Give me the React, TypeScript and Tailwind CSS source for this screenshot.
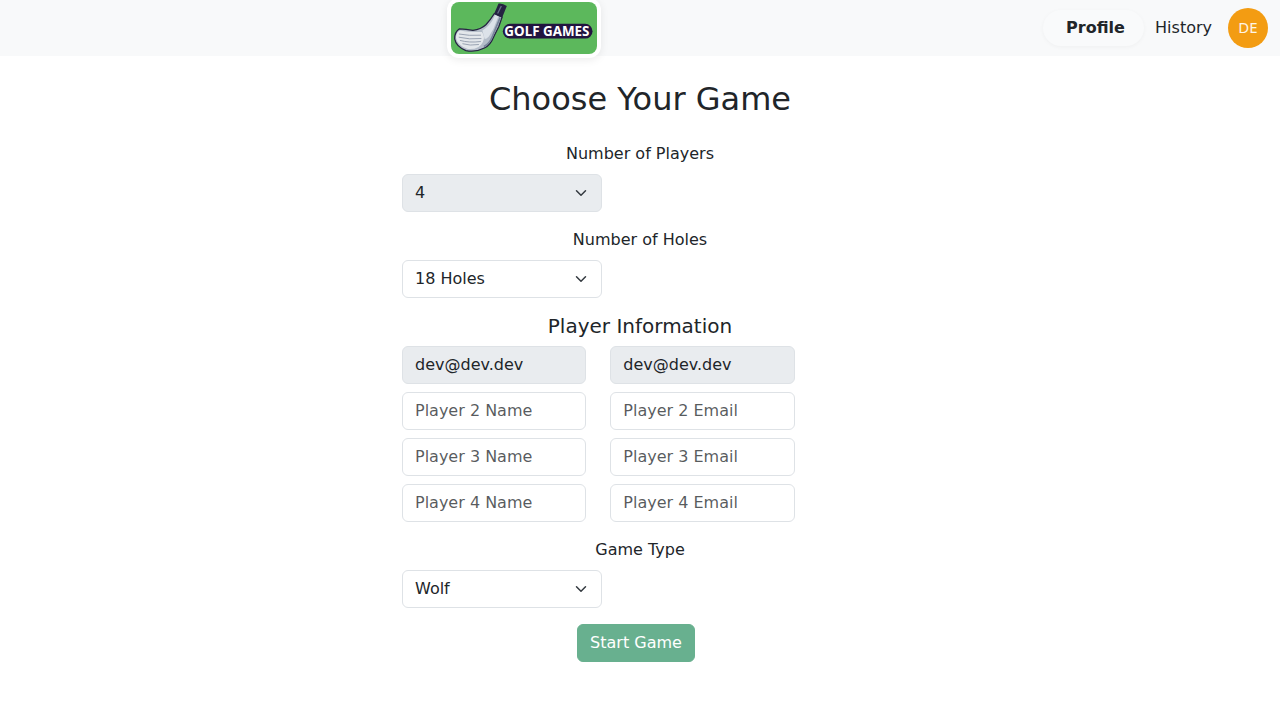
import { useState } from "react";

const field =
  "col-start-1 row-start-1 h-[38px] w-full min-w-0 rounded-md border border-[#dee2e6] px-3 text-base leading-6 text-[#212529] outline-none placeholder:text-[#212529]/75 disabled:bg-[#e9ecef] disabled:opacity-100";

function Select({
  label,
  options,
  disabled = false,
}: {
  label: string;
  options: string[];
  disabled?: boolean;
}) {
  return (
    <label className="mb-4 flex flex-col">
      <span className="mb-2 text-center">{label}</span>
      <span className="grid w-[200px] items-center">
        <select
          disabled={disabled}
          className={`${field} appearance-none py-1.5 ${disabled ? "" : "bg-white"}`}
        >
          {options.map((o) => (
            <option key={o}>{o}</option>
          ))}
        </select>
        <svg
          viewBox="0 0 16 16"
          className="pointer-events-none col-start-1 row-start-1 mr-[13px] h-3 w-4 justify-self-end"
          fill="none"
          stroke="#343a40"
          strokeLinecap="round"
          strokeLinejoin="round"
          strokeWidth="2"
        >
          <path d="m2 5 6 6 6-6" />
        </svg>
      </span>
    </label>
  );
}

function Logo() {
  return (
    <svg viewBox="0 0 147 52" className="block h-[52px] w-[146.5px] rounded-lg" preserveAspectRatio="none">
      <rect width="147" height="52" fill="#5cb85c" />
      <rect x="52" y="21.8" width="90" height="14.8" rx="7.4" fill="#211440" />
      <path
        d="M43.5 11.5 51.3 15 48 24.5 43 34.5Q39.5 43.5 33.5 46 25 50.5 15 48.6 5 44.5 3.7 37 3.5 30 8.5 26.8 15 27 22 28.4 30 27.5 35 22.8 39.5 18 43.5 11.5Z"
        fill="#b4bdc9"
        stroke="#252342"
        strokeWidth="1.3"
        strokeLinejoin="round"
      />
      <path d="M44.3 13 47.5 14.4 42.5 27 38 34.5Q35.5 37 33.8 37L31.5 28.5Q38 24.5 41.5 18.5Z" fill="#dce2e9" />
      <path d="M49.3 15.6 41.5 34.5Q38.5 42 33 44.5" fill="none" stroke="#77849a" strokeWidth="1.7" />
      <path
        d="M5 35.5Q5.8 29 9.5 28.5 18 30.3 31 30 34.5 34.5 32 40 28.5 47.8 17 47 6 43.5 5 35.5Z"
        fill="#e3e7eb"
      />
      <path
        d="M8 32Q18 34 30 33.2M7.8 35.2Q18 37.8 30.5 36.5M9 38.4Q18 41 30 39.5M11.5 41.7Q19 44 28 42.5"
        fill="none"
        stroke="#919bac"
        strokeWidth="0.9"
      />
      <path d="M47.7 1.5Q52 1 56 4L51.3 15.7 43.2 12Z" fill="#252342" />
      <path d="M50.5 4 46.8 11.5" stroke="#68708b" strokeWidth="1.3" />
      <text
        x="53.5"
        y="34.2"
        textLength="85.5"
        lengthAdjust="spacingAndGlyphs"
        fill="#fff"
        className="font-['Noto_Sans',sans-serif] text-[13.5px] font-bold"
      >
        GOLF GAMES
      </text>
    </svg>
  );
}

export default function App() {
  const [players, setPlayers] = useState<Record<string, string>>({});
  return (
    <div className="min-h-screen bg-white font-['DejaVu_Sans',sans-serif] text-base leading-6 text-[#212529]">
      <nav className="flex h-14 items-center bg-[#f8f9fa] pr-3 pl-[446.7px]">
        <a href="#" className="-my-1 rounded-xl bg-white p-1 shadow-[0_2px_8px_rgba(0,0,0,0.08)]">
          <Logo />
        </a>
        <div className="ml-auto flex items-center">
          <a
            href="#"
            className="mr-[11px] flex h-9 w-[101px] items-center rounded-full bg-[#f9fafb] pl-[23px] font-bold shadow-[0_1px_4px_rgba(0,0,0,0.04)]"
          >
            Profile
          </a>
          <a href="#" className="mr-4">
            History
          </a>
          <div className="flex size-10 items-center justify-center rounded-full bg-[#f39c12] pb-0.5 font-['Noto_Sans',sans-serif] text-[15px] font-normal text-white/90">
            DE
          </div>
        </div>
      </nav>
      <main className="mx-auto w-[476px] pt-6">
        <h2 className="mb-6 text-center text-[32px] leading-[38.4px]">Choose Your Game</h2>
        <Select label="Number of Players" options={["4"]} disabled />
        <Select label="Number of Holes" options={["18 Holes", "9 Holes"]} />
        <h5 className="mb-2 text-center text-xl leading-6">Player Information</h5>
        {[1, 2, 3, 4].map((n) => (
          <div key={n} className="mb-2 grid grid-cols-[184.33px_184.33px] gap-6">
            {["Name", "Email"].map((kind) => (
              <input
                key={kind}
                className={`${field} pt-[5px] pb-[7px] ${kind === "Name" ? "" : "col-start-2!"}`}
                disabled={n === 1}
                placeholder={`Player ${n} ${kind}`}
                value={n === 1 ? "dev@dev.dev" : (players[n + kind] ?? "")}
                onChange={(e) => setPlayers({ ...players, [n + kind]: e.target.value })}
              />
            ))}
          </div>
        ))}
        <div className="pt-2">
          <Select label="Game Type" options={["Wolf"]} />
        </div>
        <div className="flex justify-center pr-2">
          <button
            disabled
            className="h-[38px] rounded-md border border-[#198754] bg-[#198754] px-3 text-white opacity-65"
          >
            Start Game
          </button>
        </div>
      </main>
    </div>
  );
}
